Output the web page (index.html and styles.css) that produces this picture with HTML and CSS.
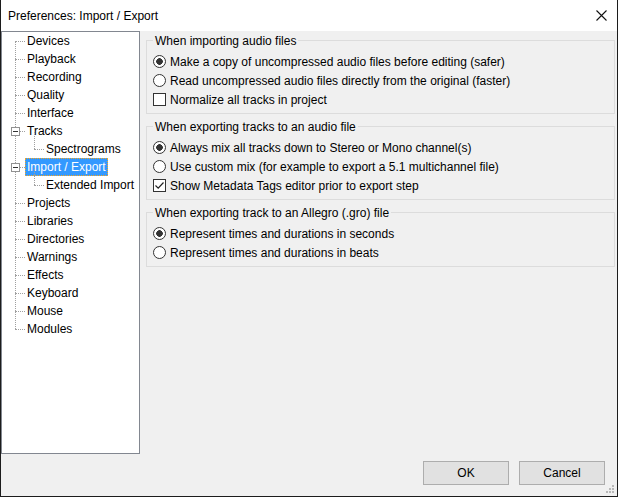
FILE: index.html
```html
<!DOCTYPE html>
<html>
<head>
<meta charset="utf-8">
<link rel="stylesheet" href="styles.css">
</head>
<body>
<div class="window">
  <div class="titlebar">
    <span class="title">Preferences: Import / Export</span>
    <svg class="close" width="11" height="11" viewBox="0 0 11 11"><path d="M0.5 0.5 L10.5 10.5 M10.5 0.5 L0.5 10.5" stroke="#111" stroke-width="1.1" fill="none"/></svg>
  </div>
  <div class="client">
    <div class="body">
      <div class="tree">
        <ul class="lvl1">
          <li><div class="node"><span class="label">Devices</span></div></li>
          <li><div class="node"><span class="label">Playback</span></div></li>
          <li><div class="node"><span class="label">Recording</span></div></li>
          <li><div class="node"><span class="label">Quality</span></div></li>
          <li><div class="node"><span class="label">Interface</span></div></li>
          <li><div class="node"><span class="toggle"></span><span class="label">Tracks</span></div>
            <ul class="lvl2"><li><div class="node"><span class="label">Spectrograms</span></div></li></ul>
          </li>
          <li><div class="node"><span class="toggle"></span><span class="label selected">Import / Export</span></div>
            <ul class="lvl2"><li><div class="node"><span class="label">Extended Import</span></div></li></ul>
          </li>
          <li><div class="node"><span class="label">Projects</span></div></li>
          <li><div class="node"><span class="label">Libraries</span></div></li>
          <li><div class="node"><span class="label">Directories</span></div></li>
          <li><div class="node"><span class="label">Warnings</span></div></li>
          <li><div class="node"><span class="label">Effects</span></div></li>
          <li><div class="node"><span class="label">Keyboard</span></div></li>
          <li><div class="node"><span class="label">Mouse</span></div></li>
          <li><div class="node"><span class="label">Modules</span></div></li>
        </ul>
      </div>
      <div class="main">
        <div class="group">
          <div class="group-title">When importing audio files</div>
          <div class="option first"><span class="radio checked"></span><span class="text">Make a copy of uncompressed audio files before editing (safer)</span></div>
          <div class="option"><span class="radio"></span><span class="text">Read uncompressed audio files directly from the original (faster)</span></div>
          <div class="option"><span class="check"></span><span class="text">Normalize all tracks in project</span></div>
        </div>
        <div class="group">
          <div class="group-title">When exporting tracks to an audio file</div>
          <div class="option first"><span class="radio checked"></span><span class="text">Always mix all tracks down to Stereo or Mono channel(s)</span></div>
          <div class="option"><span class="radio"></span><span class="text">Use custom mix (for example to export a 5.1 multichannel file)</span></div>
          <div class="option"><span class="check"><svg width="11" height="11" viewBox="0 0 11 11"><path d="M1.5 5.5 L4.2 8.2 L9.5 2.5" stroke="#222" stroke-width="1.2" fill="none"/></svg></span><span class="text">Show Metadata Tags editor prior to export step</span></div>
        </div>
        <div class="group">
          <div class="group-title">When exporting track to an Allegro (.gro) file</div>
          <div class="option first"><span class="radio checked"></span><span class="text">Represent times and durations in seconds</span></div>
          <div class="option"><span class="radio"></span><span class="text">Represent times and durations in beats</span></div>
        </div>
      </div>
    </div>
    <div class="footer">
      <button class="btn">OK</button>
      <button class="btn">Cancel</button>
    </div>
    <svg class="grip" width="12" height="10" viewBox="0 0 12 10">
      <rect x="9" y="0" width="2" height="2" fill="#b8b8b8"/>
      <rect x="6" y="3" width="2" height="2" fill="#b8b8b8"/>
      <rect x="9" y="3" width="2" height="2" fill="#b8b8b8"/>
      <rect x="3" y="6" width="2" height="2" fill="#b8b8b8"/>
      <rect x="6" y="6" width="2" height="2" fill="#b8b8b8"/>
      <rect x="9" y="6" width="2" height="2" fill="#b8b8b8"/>
    </svg>
  </div>
</div>
</body>
</html>
```
FILE: styles.css
```css
html, body {
  margin: 0;
  padding: 0;
  background: #ffffff;
}
body {
  font-family: "Liberation Sans", Arial, sans-serif;
  font-size: 12px;
  color: #000;
}
.window {
  width: 618px;
  height: 497px;
  box-sizing: border-box;
  border: 1px solid #1c1c1c;
  border-top: none;
  display: flex;
  flex-direction: column;
}
.titlebar {
  height: 31px;
  flex: none;
  background: #fff;
  display: flex;
  align-items: center;
  padding-left: 7px;
  padding-right: 10px;
}
.title {
  flex: 1;
  line-height: 15px;
  padding-top: 1px;
}
.close {
  display: block;
}
.client {
  flex: 1;
  background: #f0f0f0;
  position: relative;
  display: flex;
  flex-direction: column;
}
.body {
  display: flex;
  height: 423px;
  flex: none;
}
.tree {
  width: 139px;
  height: 423px;
  box-sizing: border-box;
  border: 1px solid #828790;
  background: #fff;
  flex: none;
}
.tree ul {
  list-style: none;
  margin: 0;
  padding: 0;
}
.lvl1 {
  position: relative;
}
.lvl1::before {
  content: "";
  position: absolute;
  left: 13px;
  top: 9px;
  bottom: 9px;
  border-left: 1px dotted #a0a0a0;
}
.lvl2 {
  position: relative;
}
.lvl2::before {
  content: "";
  position: absolute;
  left: 32px;
  top: -8px;
  height: 17px;
  border-left: 1px dotted #a0a0a0;
}
.node {
  height: 18px;
  display: flex;
  align-items: flex-start;
  position: relative;
}
.node::before {
  content: "";
  position: absolute;
  left: 13px;
  top: 9px;
  width: 10px;
  border-top: 1px dotted #a0a0a0;
}
.lvl2 .node::before {
  left: 32px;
  width: 10px;
}
.toggle {
  position: absolute;
  left: 9px;
  top: 5px;
  width: 9px;
  height: 9px;
  box-sizing: border-box;
  border: 1px solid #919191;
  background: #fff;
  z-index: 1;
}
.toggle::after {
  content: "";
  position: absolute;
  left: 1px;
  top: 3px;
  width: 5px;
  height: 1px;
  background: #333;
}
.label {
  margin-left: 23px;
  padding: 1px 2px 0;
  line-height: 17px;
  height: 17px;
  white-space: nowrap;
  position: relative;
}
.lvl2 .label {
  margin-left: 42px;
}
.label.selected {
  background: #3399ff;
  color: #fff;
  outline: 1px dotted #f5a623;
  outline-offset: -1px;
}
.main {
  flex: 1;
  margin-left: 6px;
  margin-right: 2px;
  padding-top: 9px;
}
.group {
  border: 1px solid #dcdcdc;
  padding-bottom: 4px;
  margin-bottom: 12px;
}
.group-title {
  width: fit-content;
  margin: -8px 0 0 6px;
  padding: 1px 2px 0;
  line-height: 15px;
  background: #f0f0f0;
}
.option {
  height: 19px;
  display: flex;
  align-items: center;
  padding-left: 6px;
  gap: 4px;
  white-space: nowrap;
}
.option.first {
  margin-top: 3px;
}
.text {
  padding-top: 2px;
  line-height: 15px;
}
.radio {
  width: 13px;
  height: 13px;
  box-sizing: border-box;
  border: 1px solid #333;
  border-radius: 50%;
  background: #fff;
  flex: none;
}
.radio.checked {
  background: radial-gradient(circle, #333 0, #333 3px, #fff 3.6px);
}
.check {
  width: 13px;
  height: 13px;
  box-sizing: border-box;
  border: 1px solid #333;
  background: #fff;
  flex: none;
  display: flex;
  align-items: center;
  justify-content: center;
}
.check svg {
  display: block;
}
.footer {
  display: flex;
  justify-content: flex-end;
  gap: 10px;
  padding-top: 7px;
  padding-right: 12px;
}
.btn {
  width: 86px;
  height: 24px;
  margin: 0;
  padding: 0;
  background: #e1e1e1;
  border: 1px solid #adadad;
  font-family: inherit;
  font-size: 12px;
  color: #000;
}
.grip {
  position: absolute;
  right: 2px;
  bottom: 1px;
}
```
